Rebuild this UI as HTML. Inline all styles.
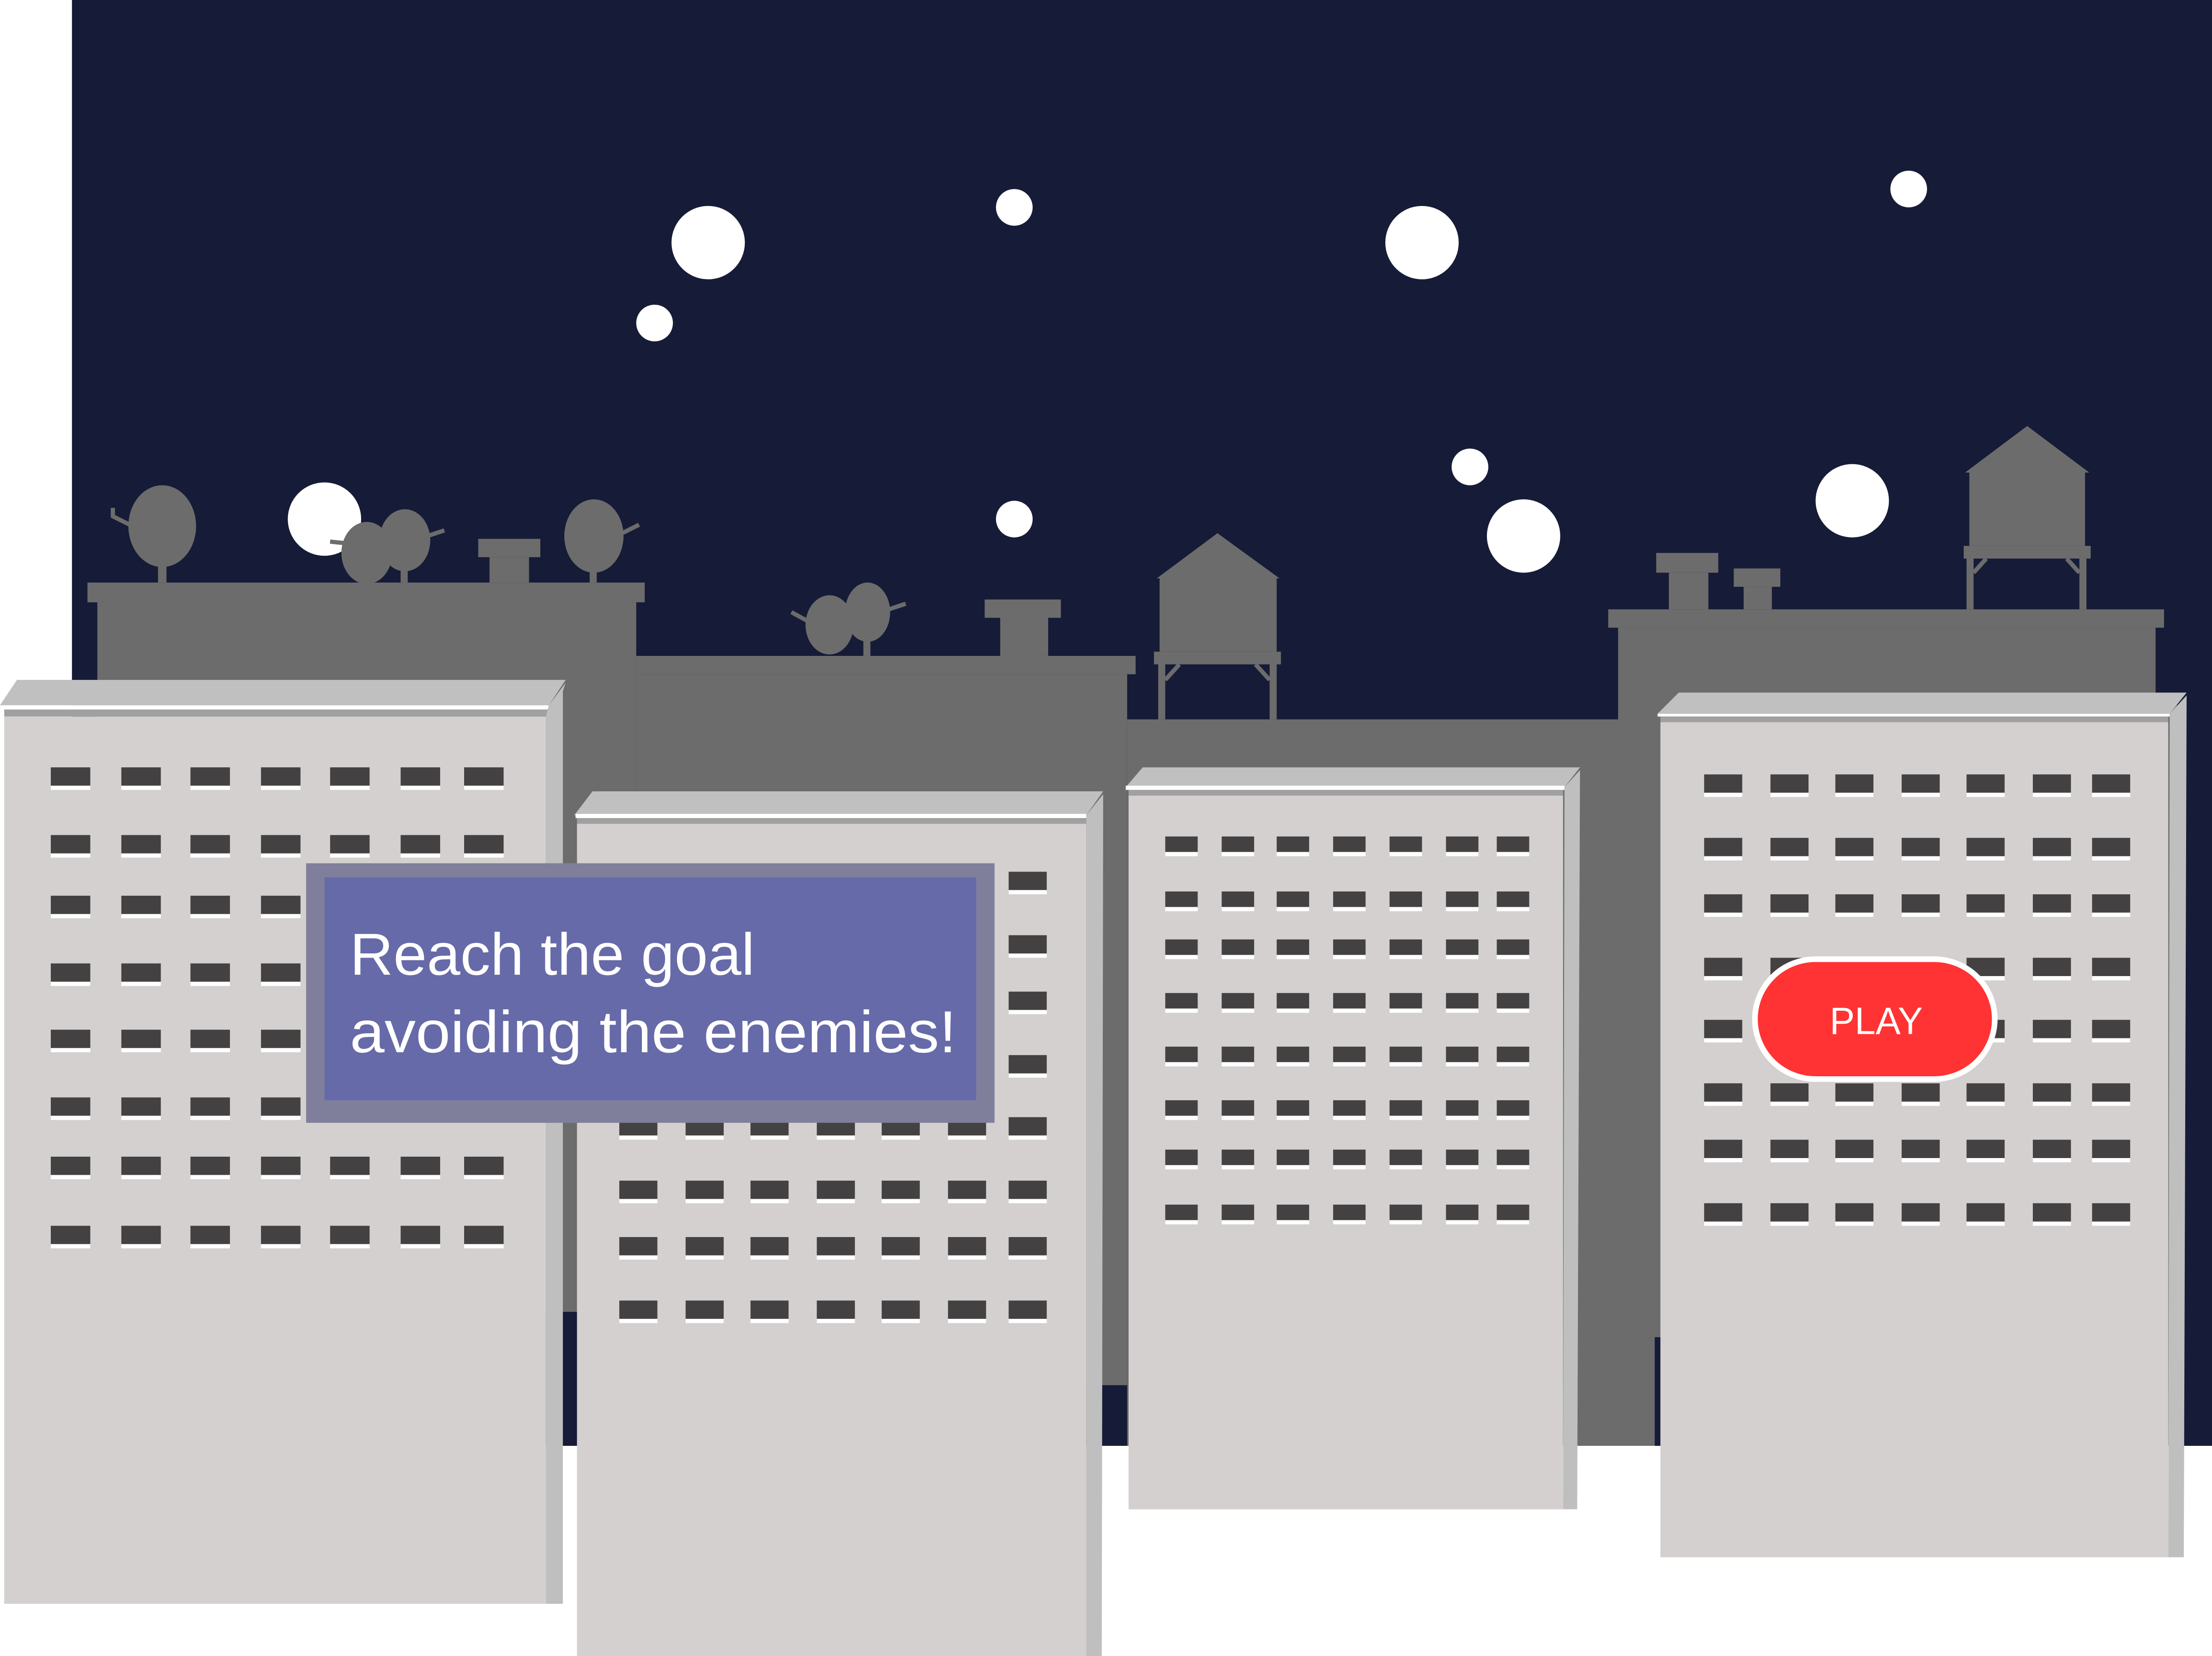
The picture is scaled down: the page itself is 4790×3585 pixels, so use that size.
<!DOCTYPE html>
<html><head><meta charset="utf-8"><style>
html,body{margin:0;padding:0;background:#fff;overflow:hidden}
svg{display:block}
</style></head><body>
<svg width="4790" height="3585" viewBox="0 0 1568 1174" preserveAspectRatio="none" xmlns="http://www.w3.org/2000/svg">
<defs>
<g id="w1"><rect width="28" height="13" fill="#434142"/><rect y="13" width="28" height="3" fill="#fff"/></g>
<g id="r1"><use href="#w1" x="36"/><use href="#w1" x="86"/><use href="#w1" x="135"/><use href="#w1" x="185"/><use href="#w1" x="234"/><use href="#w1" x="284"/><use href="#w1" x="329"/></g>
<g id="w2"><rect width="27" height="13" fill="#434142"/><rect y="13" width="27" height="3" fill="#fff"/></g>
<g id="r2"><use href="#w2" x="439"/><use href="#w2" x="486"/><use href="#w2" x="532"/><use href="#w2" x="579"/><use href="#w2" x="625"/><use href="#w2" x="672"/><use href="#w2" x="715"/></g>
<g id="w3"><rect width="23" height="11" fill="#434142"/><rect y="11" width="23" height="3" fill="#fff"/></g>
<g id="r3"><use href="#w3" x="826"/><use href="#w3" x="866"/><use href="#w3" x="905"/><use href="#w3" x="945"/><use href="#w3" x="985"/><use href="#w3" x="1025"/><use href="#w3" x="1061"/></g>
<g id="r4"><use href="#w2" x="1208"/><use href="#w2" x="1255"/><use href="#w2" x="1301"/><use href="#w2" x="1348"/><use href="#w2" x="1394"/><use href="#w2" x="1441"/><use href="#w2" x="1483"/></g>
</defs>
<rect width="1568" height="1174" fill="#fff"/>
<rect x="51" y="0" width="1517" height="1025" fill="#161c37"/>
<g fill="#fff">
<circle cx="502" cy="172" r="26"/><circle cx="719" cy="147" r="13"/><circle cx="464" cy="229" r="13"/>
<circle cx="1008" cy="172" r="26"/><circle cx="1353" cy="134" r="13"/><circle cx="1042" cy="331" r="13"/>
<circle cx="1080" cy="380" r="26"/><circle cx="1313" cy="355" r="26"/><circle cx="719" cy="368" r="13"/>
<circle cx="230" cy="368" r="26"/>
</g>
<g fill="#6c6c6c">
<rect x="62" y="413" width="395" height="14"/><rect x="69" y="427" width="382" height="503"/>
<rect x="451" y="465" width="354" height="13"/><rect x="451" y="478" width="348" height="504"/>
<rect x="799" y="510" width="374" height="515"/>
<rect x="1140" y="432" width="394" height="13"/><rect x="1147" y="445" width="381" height="503"/>
<rect x="1177" y="500" width="371" height="525"/>
<rect x="339" y="382" width="44" height="13"/><rect x="347" y="395" width="28" height="18"/>
<rect x="698" y="425" width="54" height="13"/><rect x="709" y="438" width="34" height="27"/>
<rect x="1174" y="392" width="44" height="14"/><rect x="1183" y="406" width="28" height="26"/>
<rect x="1229" y="403" width="33" height="13"/><rect x="1236" y="416" width="20" height="16"/>
<ellipse cx="115" cy="373" rx="24" ry="29"/><rect x="112" y="395" width="6" height="18"/>
<ellipse cx="260" cy="392" rx="18" ry="22"/><ellipse cx="287" cy="383" rx="18" ry="22"/><rect x="284" y="400" width="5" height="13"/>
<ellipse cx="421" cy="380" rx="21" ry="26"/><rect x="418" y="400" width="5" height="13"/>
<ellipse cx="588" cy="443" rx="17" ry="21"/><ellipse cx="615" cy="434" rx="16" ry="21"/><rect x="612" y="450" width="5" height="15"/>
<path d="M820 410 L863 378 L907 410 Z"/><rect x="822" y="410" width="83" height="52"/><rect x="818" y="462" width="90" height="9"/>
<rect x="821" y="470" width="5" height="40"/><rect x="900" y="470" width="5" height="40"/>
<path d="M1393 335 L1437 302 L1481 335 Z"/><rect x="1396" y="335" width="82" height="52"/><rect x="1392" y="387" width="90" height="9"/>
<rect x="1394" y="395" width="5" height="37"/><rect x="1474" y="395" width="5" height="37"/>
</g>
<rect x="1173" y="948" width="3" height="77" fill="#161c37"/>
<g stroke="#6c6c6c" stroke-width="3" fill="none">
<path d="M92 372 L80 366 L80 360"/><path d="M244 385 L234 384"/><path d="M303 380 L315 376"/><path d="M441 378 L453 372"/>
<path d="M572 440 L561 434"/><path d="M630 432 L642 428"/>
<path d="M826 482 L836 471"/><path d="M900 482 L890 471"/><path d="M1399 406 L1408 396"/><path d="M1474 406 L1465 396"/>
</g>
<polygon points="12,482 401,482 389,500 0,500" fill="#c0c0c0"/>
<rect x="2" y="500" width="388" height="3" fill="#fff"/>
<rect x="3" y="503" width="385" height="5" fill="#a0a0a0"/>
<polygon points="389,500 401,484 399,490 399,1137 387,1137 387,508" fill="#bfbfbf"/>
<rect x="3" y="508" width="384" height="629" fill="#d3d0cf"/>
<use href="#r1" y="544"/><use href="#r1" y="592"/><use href="#r1" y="635"/><use href="#r1" y="683"/><use href="#r1" y="730"/><use href="#r1" y="778"/><use href="#r1" y="820"/><use href="#r1" y="869"/>
<polygon points="420,561 782,561 770,578 407,578" fill="#c0c0c0"/>
<rect x="408" y="577" width="362" height="3" fill="#fff"/>
<rect x="409" y="580" width="361" height="4" fill="#a0a0a0"/>
<polygon points="770,578 782,563 781,1174 770,1174" fill="#bfbfbf"/>
<rect x="409" y="584" width="361" height="590" fill="#d3d0cf"/>
<use href="#r2" y="618"/><use href="#r2" y="663"/><use href="#r2" y="703"/><use href="#r2" y="748"/><use href="#r2" y="792"/><use href="#r2" y="837"/><use href="#r2" y="877"/><use href="#r2" y="922"/>
<polygon points="810,544 1120,544 1109,558 798,558" fill="#c0c0c0"/>
<rect x="798" y="557" width="311" height="3" fill="#fff"/>
<rect x="800" y="560" width="308" height="4" fill="#a0a0a0"/>
<polygon points="1109,558 1120,546 1118,1070 1108,1070" fill="#bfbfbf"/>
<rect x="800" y="564" width="308" height="506" fill="#d3d0cf"/>
<use href="#r3" y="593"/><use href="#r3" y="632"/><use href="#r3" y="666"/><use href="#r3" y="704"/><use href="#r3" y="742"/><use href="#r3" y="780"/><use href="#r3" y="815"/><use href="#r3" y="854"/>
<polygon points="1190,491 1550,491 1538,506 1175,506" fill="#c0c0c0"/>
<rect x="1175" y="506" width="363" height="2" fill="#fff"/>
<rect x="1177" y="508" width="360" height="4" fill="#a0a0a0"/>
<polygon points="1538,506 1550,493 1548,1104 1537,1104" fill="#bfbfbf"/>
<rect x="1177" y="512" width="360" height="592" fill="#d3d0cf"/>
<use href="#r4" y="549"/><use href="#r4" y="594"/><use href="#r4" y="634"/><use href="#r4" y="679"/><use href="#r4" y="723"/><use href="#r4" y="768"/><use href="#r4" y="808"/><use href="#r4" y="853"/>
<rect x="217" y="612" width="488" height="184" fill="#7f7f9c"/>
<rect x="230" y="622" width="462" height="158" fill="#666aa8"/>
<g fill="#fff" font-family="'Liberation Sans', sans-serif" font-size="42">
<text x="248" y="691" textLength="287" lengthAdjust="spacingAndGlyphs">Reach the goal</text>
<text x="248" y="746" textLength="430" lengthAdjust="spacingAndGlyphs">avoiding the enemies!</text>
</g>
<rect x="1244" y="680" width="170" height="85" rx="43" ry="43" fill="#ff3333" stroke="#fff" stroke-width="4"/>
<text x="1330" y="733" text-anchor="middle" fill="#fff" font-family="'Liberation Sans', sans-serif" font-size="27" textLength="66" lengthAdjust="spacingAndGlyphs">PLAY</text>
</svg>
</body></html>
